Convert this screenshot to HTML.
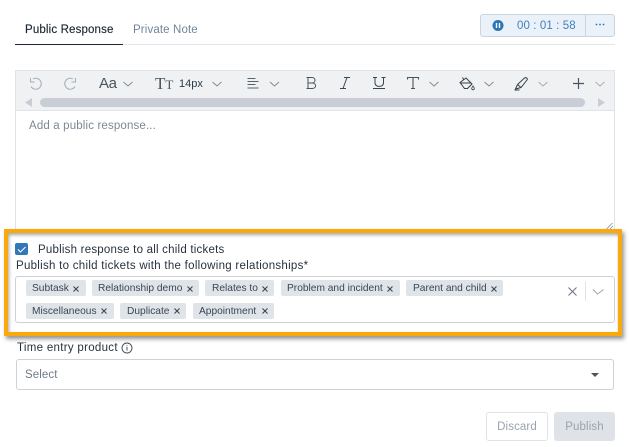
<!DOCTYPE html>
<html><head><meta charset="utf-8">
<style>
html,body{margin:0;padding:0;background:#fff}
#p{position:relative;width:629px;height:447px;overflow:hidden;font-family:"Liberation Sans",sans-serif;color:#2d3a47;font-size:11.5px}
#p div{position:absolute;white-space:nowrap}
.tag{background:#dfe4e9;height:16px;border-radius:2px;font-size:10.2px;line-height:18px;padding-left:6px;color:#3a4654;box-sizing:border-box}
svg{position:absolute;overflow:visible}
</style></head><body>
<div id="p">
<div style="left:25px;top:23px;line-height:14px;letter-spacing:.15px;color:#1c2733;-webkit-text-stroke:.15px #1c2733">Public Response</div>
<div style="left:133px;top:23px;line-height:14px;letter-spacing:.13px;color:#71859a">Private Note</div>
<div style="left:15px;top:44px;width:600px;height:1px;background:#e2e5e9"></div>
<div style="left:15px;top:44px;width:108px;height:1px;background:#1c2733"></div>

<div style="left:480px;top:14px;width:135px;height:23px;box-sizing:border-box;background:#ebf1f9;border:1px solid #cbd5e0;border-radius:3px"></div>
<div style="left:585px;top:15px;width:1px;height:21px;background:#cbd5e0"></div>
<svg style="left:0;top:0" width="629" height="447">
<circle cx="498" cy="25.5" r="5.500" fill="#2c76b8"/>
<rect x="495.800" y="23" width="1.400" height="5" fill="#fff"/><rect x="498.800" y="23" width="1.400" height="5" fill="#fff"/>
<g fill="#2c76b8"><circle cx="596.500" cy="24.500" r=".9"/><circle cx="600" cy="24.500" r=".9"/><circle cx="603.500" cy="24.500" r=".9"/></g>
</svg>
<div style="left:517px;top:19px;line-height:14px;letter-spacing:.1px;color:#3f80bd">00 : 01 : 58</div>

<div style="left:15px;top:70px;width:600px;height:163px;box-sizing:border-box;border:1px solid #e0e3e7"></div>
<div style="left:16px;top:71px;width:598px;height:39px;background:#eff1f3;border-bottom:1px solid #e0e3e7"></div>
<div style="left:40px;top:98px;width:545px;height:9px;border-radius:5px;background:#c9ced6"></div>
<svg style="left:0;top:0" width="629" height="447" fill="none">
<path d="M32 98v9l-7-4.500z" fill="#c9ced6"/>
<path d="M598 98v9l7-4.500z" fill="#c9ced6"/>
<path d="M33 79A5.500 5.500 0 1 1 31 86.500M30.500 78v4h4" stroke="#a6adb5" stroke-width="1"/>
<path d="M73 79A5.500 5.500 0 1 0 75 86.500M75.500 78v4h-4" stroke="#a6adb5" stroke-width="1"/>
<g stroke="#7f8892" stroke-width=".9">
<path d="M123.500 82l4.500 4 4.500-4"/><path d="M212.500 82l4.500 4 4.500-4"/><path d="M270 82l4.500 4 4.500-4"/>
<path d="M429.500 82l4.500 4 4.500-4"/><path d="M484.500 82l4.500 4 4.500-4"/></g>
<g stroke="#a3aab2" stroke-width=".9">
<path d="M538.500 82l4.500 4 4.500-4"/><path d="M595.500 82l4.500 4 4.500-4"/></g>
<path d="M247.500 78.500h8M247.500 81.500h11M247.500 84.500h8M247.500 88h11" stroke="#59626c"/>
<path d="M306.500 77.500h5.500c4 0 4 5.500 0 5.500c4.800 0 4.800 5.500 0 5.500h-5.500M308 77.500v11M308 83h4" stroke="#4a545e" stroke-width="1"/>
<path d="M344 77.500h6M340 88.500h6M347 77.500l-4 11" stroke="#3c4650" stroke-width="1"/>
<path d="M375 77.500v5.500c0 4.500 8.500 4.500 8.500 0v-5.500M373 77.500h4M381.500 77.500h4M373 88.500h12" stroke="#3a444f" stroke-width="1"/>
<path d="M407.500 79.500v-2h11v2M413 77.500v11M411 88.500h4" stroke="#4a545e" stroke-width="1.100"/>
<path d="M460 82.500l6-4.500 6 6-4.500 4.500h-3zM464 80l-1.500-2.500M460.500 83h11" stroke="#363f49" stroke-width="1"/>
<path d="M473 86c-.8 1.200-1.300 1.800-1.300 2.500a1.300 1.300 0 0 0 2.600 0c0-.7-.5-1.300-1.300-2.500z" stroke="#363f49" stroke-width=".8"/>
<path d="M515.500 89l2-4.500 7-6.500c1.500-1 3.500.5 2.500 2l-6 7.500zM517.500 84.500l3 2.500M514.500 90h5" stroke="#363f49" stroke-width="1"/>
<path d="M578.500 78v11M573 83.500h11" stroke="#4b555f" stroke-width="1.200"/>
<path d="M606.500 229l6-6M610 229l3-3" stroke="#8b929a" stroke-width=".8"/>
</svg>
<div style="left:99px;top:76px;font-size:15px;line-height:16px;letter-spacing:-.4px;color:#4a545e">Aa</div>
<div style="left:155px;top:76px;font-family:'Liberation Serif',serif;font-size:17px;line-height:16px;color:#4b555f">T<span style="font-size:13px">T</span></div>
<div style="left:179px;top:77px;font-size:11px;line-height:15px;color:#2d3a47">14px</div>
<div style="left:29px;top:119px;line-height:14px;letter-spacing:.15px;color:#7c8896">Add a public response...</div>

<div style="left:4px;top:229px;width:618px;height:107px;box-sizing:border-box;border:4px solid #f9a90c;box-shadow:2px 3px 4px rgba(60,60,60,.55),inset 1px 2px 3px rgba(60,60,60,.45);background:#fff"></div>

<div style="left:15px;top:243px;width:13px;height:12px;background:#3178b8;border-radius:2px"></div>
<svg style="left:0;top:0" width="629" height="447" fill="none"><path d="M18 249.500l2.500 2.500 5-5" stroke="#fff" stroke-width="1.100"/></svg>
<div style="left:38px;top:243px;line-height:14px;letter-spacing:.22px;color:#27323d">Publish response to all child tickets</div>
<div style="left:16px;top:259px;line-height:14px;letter-spacing:.28px;color:#27323d">Publish to child tickets with the following relationships*</div>

<div style="left:15px;top:276px;width:600px;height:47px;box-sizing:border-box;border:1px solid #ccd2d9;border-radius:3px"></div>
<div class="tag" style="left:26px;top:280px;width:60px">Subtask</div>
<div class="tag" style="left:92px;top:280px;width:107px">Relationship demo</div>
<div class="tag" style="left:205px;top:280px;width:69px;padding-left:7px">Relates to</div>
<div class="tag" style="left:281px;top:280px;width:119px">Problem and incident</div>
<div class="tag" style="left:406px;top:280px;width:97px;padding-left:7px">Parent and child</div>
<div class="tag" style="left:26px;top:303px;width:88px">Miscellaneous</div>
<div class="tag" style="left:120px;top:303px;width:66px;padding-left:7px">Duplicate</div>
<div class="tag" style="left:193px;top:303px;width:81px">Appointment</div>
<svg style="left:0;top:0" width="629" height="447" fill="none">
<g stroke="#3a4654" stroke-width="1.100">
<path d="M73.500 286.500l5 5M78.500 286.500l-5 5"/><path d="M187.500 286.500l5 5M192.500 286.500l-5 5"/><path d="M262.500 286.500l5 5M267.500 286.500l-5 5"/>
<path d="M387.500 286.500l5 5M392.500 286.500l-5 5"/><path d="M491.500 286.500l5 5M496.500 286.500l-5 5"/>
<path d="M101.500 308.500l5 5M106.500 308.500l-5 5"/><path d="M174.500 308.500l5 5M179.500 308.500l-5 5"/><path d="M262.500 308.500l5 5M267.500 308.500l-5 5"/></g>
<path d="M568.500 287.500l8 8M576.500 287.500l-8 8" stroke="#6a737d" stroke-width="1"/>
<path d="M585.500 282v19" stroke="#dfe3e7"/>
<path d="M593 289.500l4.500 4.500 6-4.500" stroke="#9aa2ab" stroke-width=".9"/>
<circle cx="127" cy="348" r="5" stroke="#3d4751" stroke-width=".9"/>
<path d="M127 347v3.500M127 345.400v.9" stroke="#3d4751" stroke-width=".9"/>
<path d="M591 373h8l-4 4z" fill="#4a545e"/>
</svg>

<div style="left:17px;top:341px;line-height:14px;letter-spacing:.3px;color:#27323d">Time entry product</div>
<div style="left:16px;top:359px;width:598px;height:31px;box-sizing:border-box;border:1px solid #ccd2d9;border-radius:3px"></div>
<div style="left:25px;top:368px;line-height:14px;letter-spacing:.1px;color:#6f7b88">Select</div>

<div style="left:486px;top:412px;width:62px;height:29px;box-sizing:border-box;border:1px solid #dfe3e7;border-radius:3px;text-align:center;line-height:29px;letter-spacing:.1px;color:#98a3af">Discard</div>
<div style="left:554px;top:412px;width:61px;height:29px;box-sizing:border-box;background:#dfe3e7;border-radius:3px;text-align:center;line-height:31px;letter-spacing:.1px;color:#98a3af">Publish</div>
</div>
</body></html>
